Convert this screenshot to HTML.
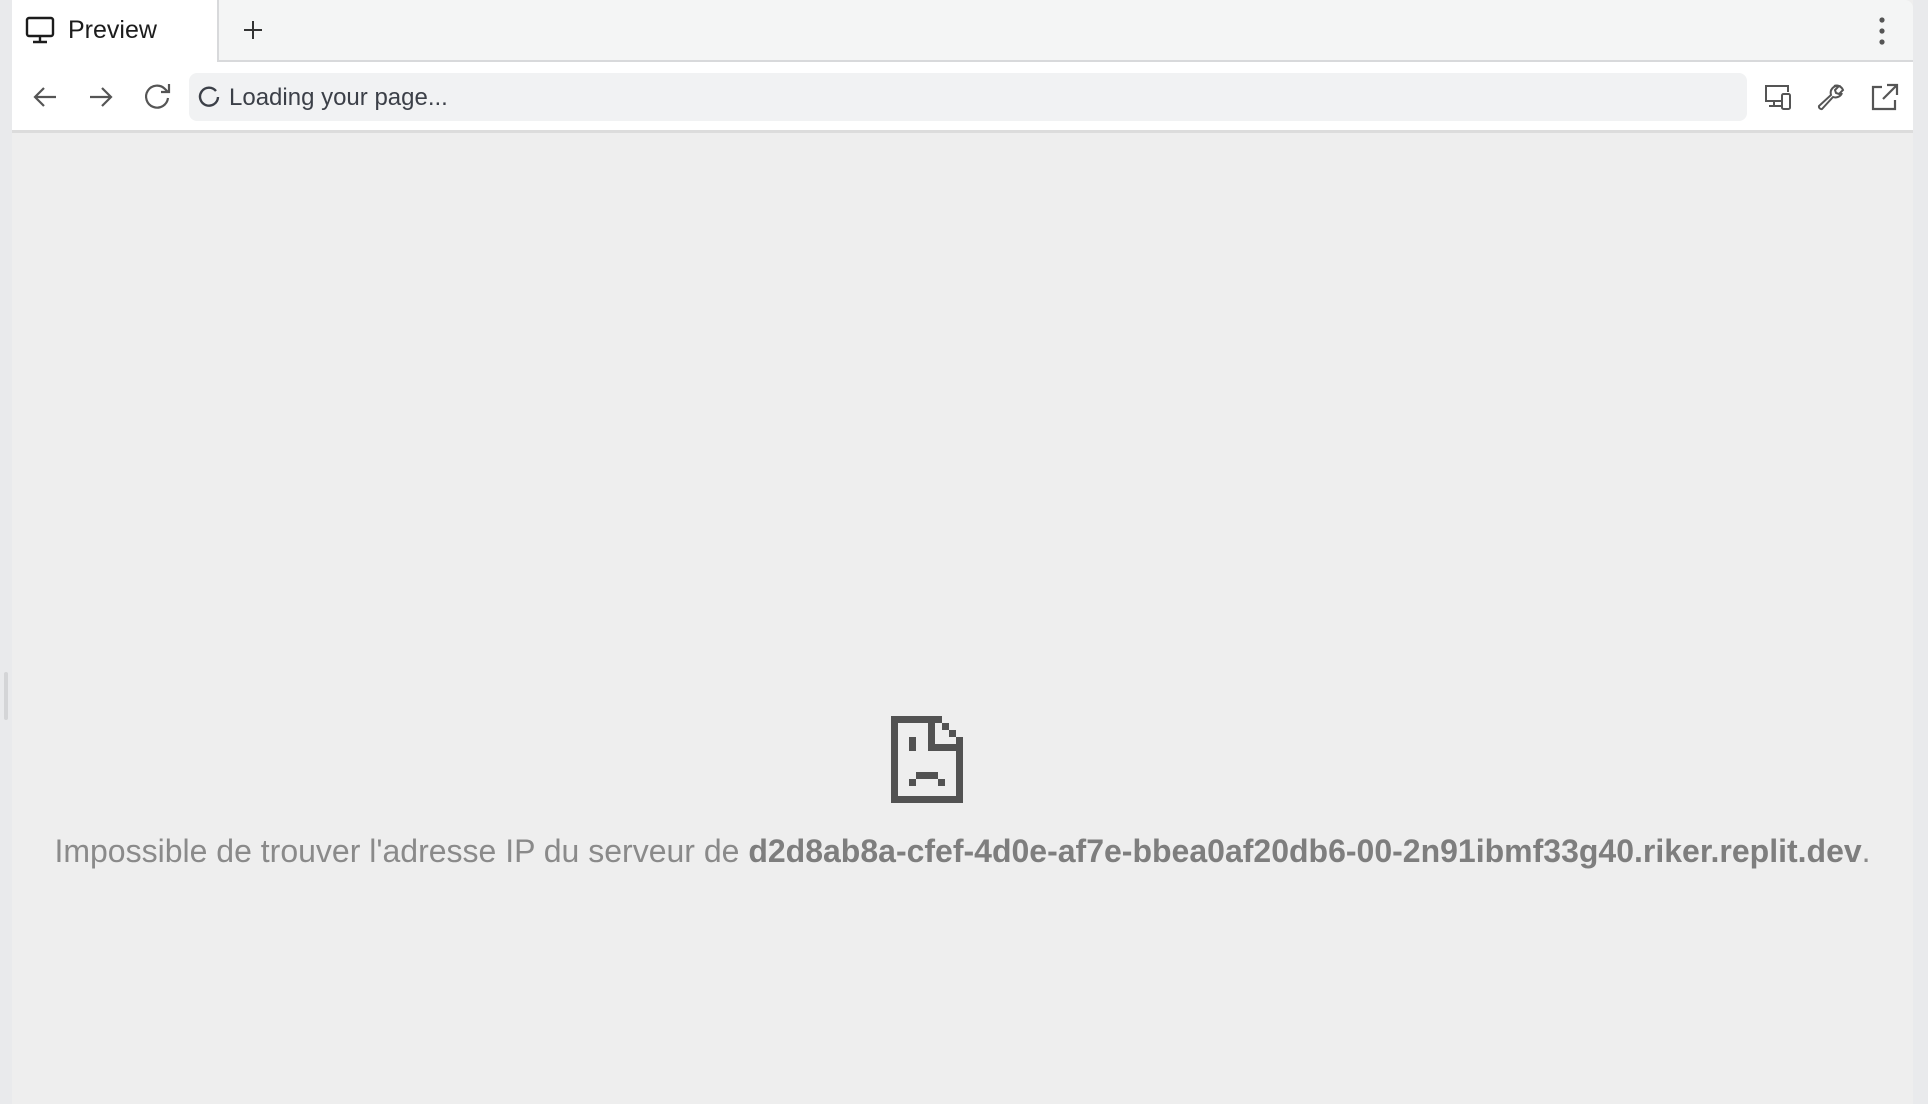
<!DOCTYPE html>
<html><head><meta charset="utf-8"><style>
*{margin:0;padding:0;box-sizing:border-box}
body{width:1928px;height:1104px;background:#e9eaec;font-family:"Liberation Sans",sans-serif;position:relative;overflow:hidden}
.panel{position:absolute;left:12px;top:0;width:1901px;height:1104px;background:#eeeeee}
.tabbar{position:absolute;left:0;top:0;width:100%;height:62px;background:#f4f5f5;border-bottom:2px solid #d8d9db;border-top-right-radius:8px}
.tab{position:absolute;left:0;top:0;width:207px;height:62px;background:#fff;border-right:2px solid #d8d9db}
.toolbar{position:absolute;left:0;top:62px;width:100%;height:71px;background:#fff;border-bottom:3px solid #dcdcdc}
.url{position:absolute;left:177px;top:11px;width:1558px;height:48px;background:#f1f2f3;border-radius:8px}
.t{position:absolute;white-space:nowrap}
svg{position:absolute}
.msg{position:absolute;left:0;width:1901px;top:833px;text-align:center;font-size:32px;color:#8a8a8a;white-space:nowrap}
.msg b{color:#7e7e7e}
</style></head><body>
<div style="position:absolute;left:4px;top:672px;width:4px;height:48px;background:#d4d5d7;border-radius:2px"></div>
<div class="panel">
 <div class="tabbar">
  <div class="tab">
   <svg style="left:13px;top:16px" width="30" height="28" viewBox="0 0 30 28" fill="none" stroke="#1c1c1c" stroke-width="2.4"><rect x="2" y="2" width="26" height="18" rx="2"/><path d="M15 20v6M8 26h14"/></svg>
   <div class="t" style="left:56px;top:16px;font-size:25px;color:#1c1c1c">Preview</div>
  </div>
  <svg style="left:231px;top:20px" width="20" height="20" viewBox="0 0 20 20" stroke="#333" stroke-width="2"><path d="M10 1v18M1 10h18"/></svg>
  <svg style="left:1866px;top:17px" width="8" height="28" viewBox="0 0 8 28" fill="#555"><circle cx="4" cy="3" r="2.6"/><circle cx="4" cy="14" r="2.6"/><circle cx="4" cy="25" r="2.6"/></svg>
 </div>
 <div class="toolbar">
  <svg style="left:20px;top:23px" width="26" height="24" viewBox="0 0 26 24" fill="none" stroke="#555" stroke-width="2.2"><path d="M24 12H3M12 3l-9 9 9 9"/></svg>
  <svg style="left:76px;top:23px" width="26" height="24" viewBox="0 0 26 24" fill="none" stroke="#555" stroke-width="2.2"><path d="M2 12h21M14 3l9 9-9 9"/></svg>
  <svg style="left:130px;top:20px" width="32" height="30" viewBox="0 0 32 30" fill="none" stroke="#555" stroke-width="2.2"><path d="M26 16a11 11 0 1 1-3-9l3 3"/><path d="M27 2v8h-8"/></svg>
  <div class="url">
   <svg style="left:9px;top:13px" width="22" height="22" viewBox="0 0 22 22" fill="none" stroke="#3c4048" stroke-width="2.4"><path d="M18 5A9 9 0 1 0 20 11"/></svg>
   <div class="t" style="left:40px;top:11px;font-size:24px;color:#3c4048">Loading your page...</div>
  </div>
  <svg style="left:1751px;top:21px" width="32" height="30" viewBox="0 0 32 30" fill="none" stroke="#555" stroke-width="2"><path d="M19 18H3V3h22v6"/><path d="M11 18v4M6 23h12"/><rect x="19" y="11" width="8" height="15" rx="1.5"/></svg>
  <svg style="left:1804px;top:20px" width="30" height="30" viewBox="0 0 30 30" fill="none" stroke="#555" stroke-width="2"><path d="M18 4a7 7 0 0 1 9 4l-4 4-3-1-1-3 4-4a7 7 0 0 0-8 9L3 24a2.5 2.5 0 0 0 3 3l11-12a7 7 0 0 0 9-4"/></svg>
  <svg style="left:1857px;top:20px" width="30" height="30" viewBox="0 0 30 30" fill="none" stroke="#555" stroke-width="2.2"><path d="M13 5H4v22h22v-9"/><path d="M18 3h10v10M28 3L14 17"/></svg>
 </div>
 <svg style="left:879px;top:716px" width="72" height="87" viewBox="0 0 72 87" fill="#525252">
  <rect x="0" y="0" width="7" height="87"/><rect x="0" y="0" width="51" height="7"/><rect x="0" y="80" width="72" height="7"/><rect x="65" y="21" width="7" height="66"/>
  <rect x="51" y="7" width="7" height="7"/><rect x="58" y="14" width="7" height="7"/>
  <rect x="37" y="7" width="7" height="28"/><rect x="37" y="28" width="35" height="7"/>
  <rect x="18" y="21" width="7" height="14"/>
  <rect x="25" y="56" width="22" height="7"/><rect x="18" y="63" width="7" height="7"/><rect x="47" y="63" width="7" height="7"/>
 </svg>
 <div class="msg">Impossible de trouver l'adresse IP du serveur de <b>d2d8ab8a-cfef-4d0e-af7e-bbea0af20db6-00-2n91ibmf33g40.riker.replit.dev</b>.</div>
</div>
</body></html>
